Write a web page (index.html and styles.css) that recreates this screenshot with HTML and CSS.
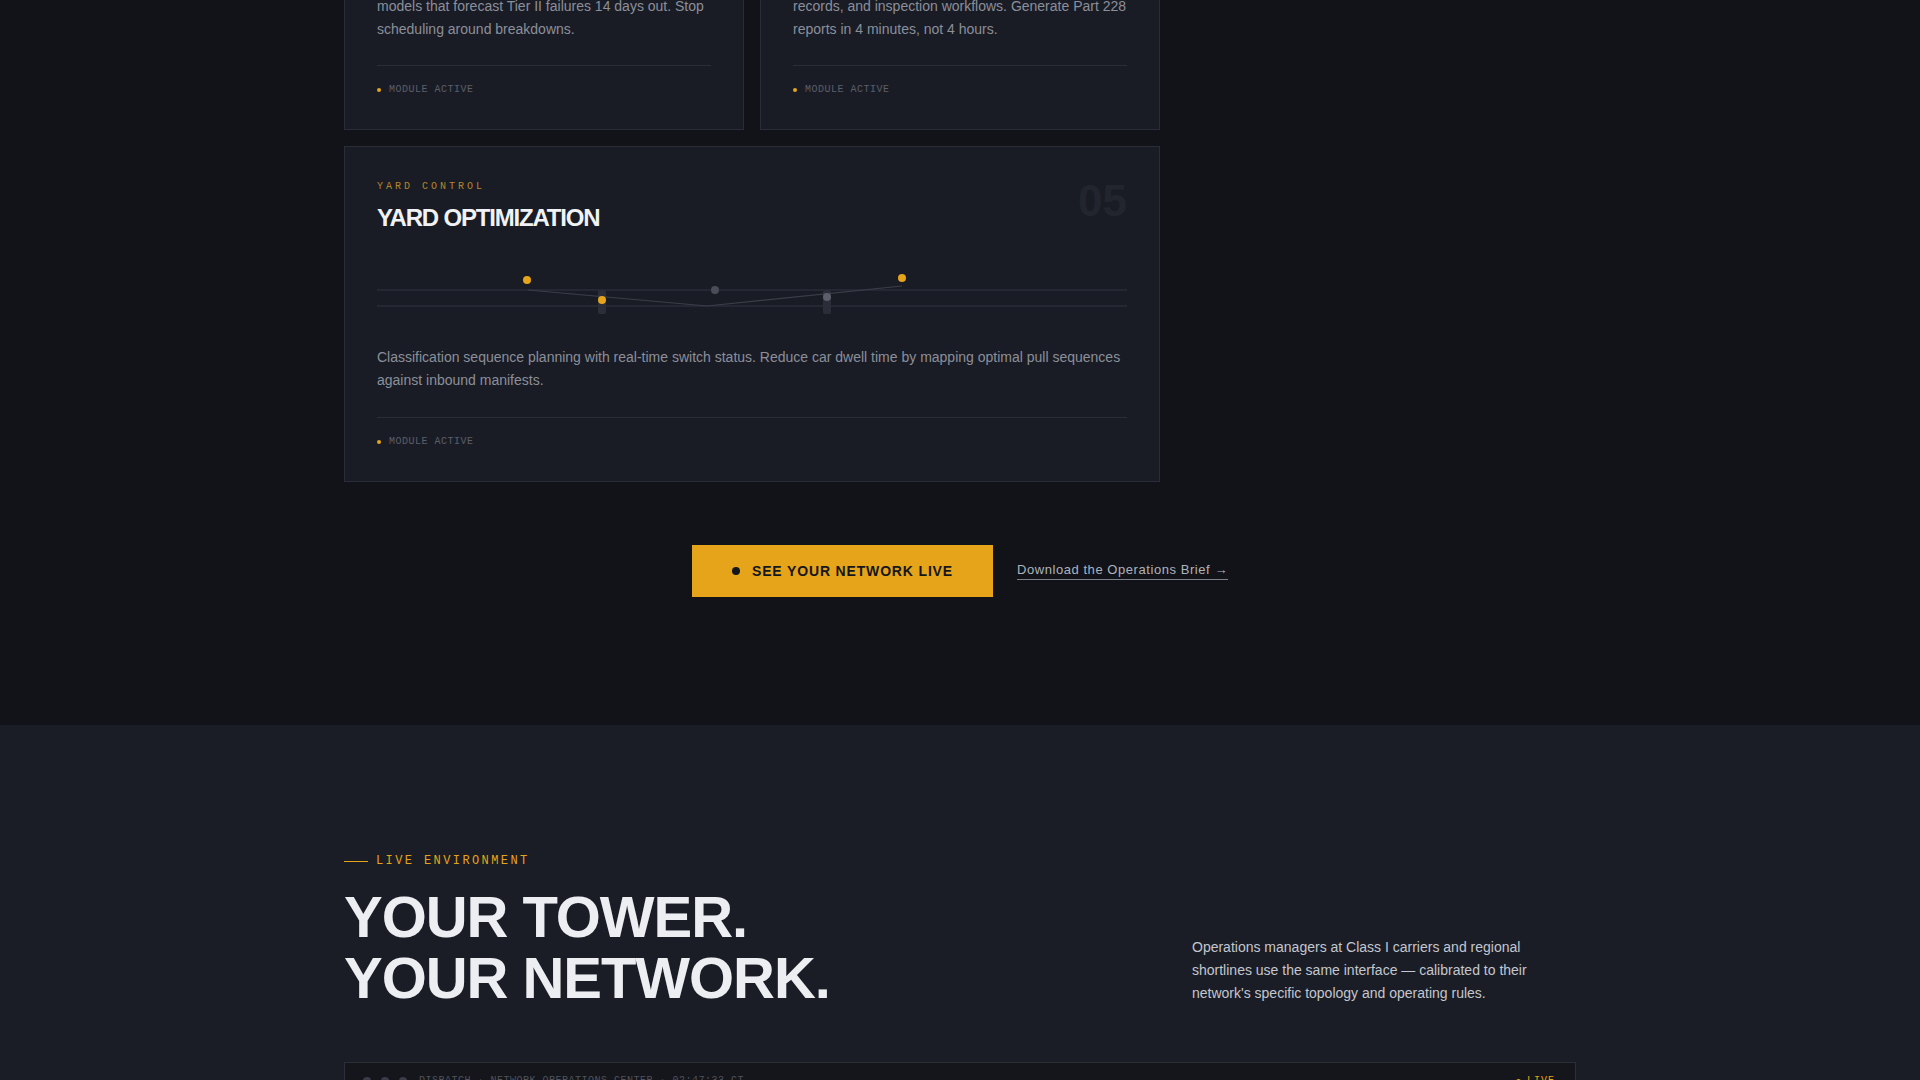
FILE: index.html
```html
<!DOCTYPE html>
<html lang="en">
<head>
<meta charset="utf-8">
<title>Dispatch — Modules</title>
<link rel="stylesheet" href="styles.css">
</head>
<body>
<section class="modules-section">
  <div class="container">
    <div class="modules">
      <article class="module">
        <div class="module-label">Predictive</div>
        <h3 class="module-title">Fleet Health</h3>
        <span class="module-num">03</span>
        <svg class="module-chart" width="334" height="64" viewBox="0 0 334 64">
          <line class="track" x1="0" y1="45" x2="334" y2="45"/>
          <rect class="bar" x="20" y="30" width="8" height="15" rx="2"/>
          <rect class="bar" x="80" y="22" width="8" height="23" rx="2"/>
          <rect class="bar" x="140" y="26" width="8" height="19" rx="2"/>
          <rect class="bar bar--hot" x="200" y="12" width="8" height="33" rx="2"/>
          <rect class="bar" x="260" y="28" width="8" height="17" rx="2"/>
        </svg>
        <p class="module-desc">Bearing telemetry and detector data feed predictive models that forecast Tier II failures 14 days out. Stop scheduling around breakdowns.</p>
        <div class="module-foot"><span class="foot-dot"></span>Module active</div>
      </article>

      <article class="module">
        <div class="module-label">Compliance</div>
        <h3 class="module-title">Crew Reporting</h3>
        <span class="module-num">04</span>
        <svg class="module-chart" width="334" height="64" viewBox="0 0 334 64">
          <line class="track" x1="0" y1="29" x2="334" y2="29"/>
          <line class="track" x1="0" y1="45" x2="334" y2="45"/>
          <circle class="pt pt--dim" cx="60" cy="29" r="4"/>
          <circle class="pt" cx="170" cy="45" r="4"/>
          <circle class="pt pt--dim" cx="280" cy="29" r="4"/>
        </svg>
        <p class="module-desc">Automatic hours-of-service logging, crew qualification records, and inspection workflows. Generate Part 228 reports in 4 minutes, not 4 hours.</p>
        <div class="module-foot"><span class="foot-dot"></span>Module active</div>
      </article>

      <article class="module module--wide">
        <div class="module-label">Yard Control</div>
        <h3 class="module-title">Yard Optimization</h3>
        <span class="module-num">05</span>
        <svg class="module-chart" width="750" height="64" viewBox="0 0 750 64">
          <line class="track" x1="0" y1="29" x2="750" y2="29"/>
          <line class="track" x1="0" y1="45" x2="750" y2="45"/>
          <rect class="bar" x="221" y="29" width="8" height="24" rx="2"/>
          <rect class="bar" x="446" y="29" width="8" height="24" rx="2"/>
          <polyline class="route" points="151,29 330,45 525,25"/>
          <circle class="pt" cx="150" cy="19" r="4"/>
          <circle class="pt" cx="225" cy="39" r="4"/>
          <circle class="pt pt--dim" cx="338" cy="29" r="4"/>
          <circle class="pt pt--mid" cx="450" cy="36" r="4"/>
          <circle class="pt" cx="525" cy="17" r="4"/>
        </svg>
        <p class="module-desc">Classification sequence planning with real-time switch status. Reduce car dwell time by mapping optimal pull sequences against inbound manifests.</p>
        <div class="module-foot"><span class="foot-dot"></span>Module active</div>
      </article>
    </div>

    <div class="cta">
      <a class="btn-primary" href="#live"><span class="btn-dot"></span>See your network live</a>
      <a class="link-brief" href="#brief">Download the Operations Brief →</a>
    </div>
  </div>
</section>

<section class="live-section" id="live">
  <div class="container">
    <div class="live-head">
      <div class="live-intro">
        <div class="eyebrow"><span class="eyebrow-line"></span>Live Environment</div>
        <h2 class="live-title">YOUR TOWER.<br>YOUR NETWORK.</h2>
      </div>
      <p class="live-copy">Operations managers at Class I carriers and regional shortlines use the same interface — calibrated to their network's specific topology and operating rules.</p>
    </div>

    <div class="console">
      <div class="console-bar">
        <div class="console-dots"><span></span><span></span><span></span></div>
        <span class="console-title">DISPATCH · NETWORK OPERATIONS CENTER · 02:47:33 CT</span>
        <span class="console-live"><span class="live-dot"></span>LIVE</span>
      </div>
      <div class="console-body"></div>
    </div>
  </div>
</section>
</body>
</html>
```
FILE: styles.css
```css
* { box-sizing: border-box; }

:root {
  --bg: #121318;
  --bg-raised: #1b1d26;
  --card: #1a1c25;
  --line: #2a2d37;
  --amber: #e5a419;
  --text: #eceef2;
  --muted: #8b8f9a;
  --sans: "Liberation Sans", Arial, sans-serif;
  --mono: "Liberation Mono", "DejaVu Sans Mono", monospace;
}

html, body { margin: 0; }

body {
  background: var(--bg);
  color: var(--text);
  font-family: var(--sans);
}

a { text-decoration: none; }

.container {
  width: 1232px;
  margin: 0 auto;
}

/* ---------- module grid ---------- */

.modules-section {
  margin-top: -226.5px;
  padding-bottom: 128px;
}

.modules {
  display: grid;
  grid-template-columns: repeat(3, 1fr);
  gap: 16px;
}

.module {
  position: relative;
  background: var(--card);
  border: 1px solid var(--line);
  padding: 32px;
}

.module--wide { grid-column: span 2; }

.module-label {
  font-family: var(--mono);
  font-size: 10px;
  line-height: 16px;
  letter-spacing: 0.3em;
  text-transform: uppercase;
  color: #b5862a;
  margin-bottom: 10px;
}

.module-title {
  margin: 0;
  font-size: 24px;
  line-height: 1.1;
  font-weight: 700;
  letter-spacing: -0.05em;
  text-transform: uppercase;
  color: #f1f2f5;
}

.module-num {
  position: absolute;
  top: 32px;
  right: 32px;
  font-size: 44px;
  line-height: 1;
  font-weight: 700;
  color: #22252e;
}

.module-chart {
  display: block;
  margin: 30px 0 20px;
  overflow: visible;
}

.module--wide .module-chart { margin-bottom: 21px; }

.track { stroke: #252832; stroke-width: 2; }
.bar { fill: #2b2e39; }
.bar--hot { fill: #6b5324; }
.route { fill: none; stroke: #3b3e49; stroke-width: 1.2; }
.pt { fill: var(--amber); }
.pt--dim { fill: #4a4d58; }
.pt--mid { fill: #5c5f6a; }

.module-desc {
  margin: 0 0 25px;
  font-size: 14px;
  line-height: 1.6;
  color: var(--muted);
}

.module--wide .module-desc { line-height: 1.63; }

.module-foot {
  display: flex;
  align-items: center;
  gap: 8px;
  border-top: 1px solid var(--line);
  padding-top: 17px;
  font-family: var(--mono);
  font-size: 10px;
  line-height: 14px;
  letter-spacing: 0.05em;
  text-transform: uppercase;
  color: #5a5e69;
}

.foot-dot {
  width: 4px;
  height: 4px;
  border-radius: 50%;
  background: var(--amber);
}

/* ---------- call to action ---------- */

.cta {
  margin-top: 63px;
  display: flex;
  justify-content: center;
  align-items: center;
  gap: 24px;
}

.btn-primary {
  display: inline-flex;
  align-items: center;
  gap: 12px;
  height: 52px;
  padding: 0 40px;
  background: var(--amber);
  color: #15161a;
  font-size: 14px;
  font-weight: 700;
  letter-spacing: 0.06em;
  text-transform: uppercase;
}

.btn-dot {
  width: 8px;
  height: 8px;
  border-radius: 50%;
  background: #15161a;
}

.link-brief {
  color: #aeb3bd;
  font-size: 13px;
  letter-spacing: 0.043em;
  padding-bottom: 2px;
  border-bottom: 1px solid #7a7f8a;
}

/* ---------- live environment ---------- */

.live-section {
  background: var(--bg-raised);
  padding-top: 128px;
}

.live-head {
  display: flex;
  justify-content: space-between;
  align-items: flex-end;
}

.eyebrow {
  display: flex;
  align-items: center;
  gap: 8px;
  font-family: var(--mono);
  font-size: 12px;
  line-height: 16px;
  letter-spacing: 0.2em;
  text-transform: uppercase;
  color: var(--amber);
  margin-bottom: 17px;
}

.eyebrow-line {
  width: 24px;
  height: 1px;
  background: var(--amber);
}

.live-title {
  margin: 0;
  font-size: 58px;
  line-height: 61px;
  font-weight: 700;
  letter-spacing: -0.018em;
  color: #eceef2;
}

.live-copy {
  width: 384px;
  margin: 0 0 3px;
  font-size: 14px;
  line-height: 1.64;
  color: #c3c7cf;
}

.console {
  margin-top: 54px;
  border: 1px solid #2c2f37;
  background: #14161b;
}

.console-bar {
  display: flex;
  align-items: center;
  gap: 12px;
  padding: 10px 20px 10px 18px;
  border-bottom: 1px solid #24272f;
  font-family: var(--mono);
  font-size: 10px;
  line-height: 16px;
}

.console-dots {
  display: flex;
  gap: 10px;
}

.console-dots span {
  width: 8px;
  height: 8px;
  border-radius: 50%;
  background: #3a3d47;
}

.console-title {
  letter-spacing: 0.05em;
  color: #50545e;
}

.console-live {
  margin-left: auto;
  display: flex;
  align-items: center;
  gap: 6px;
  letter-spacing: 0.1em;
  color: var(--amber);
}

.live-dot {
  width: 5px;
  height: 5px;
  border-radius: 50%;
  background: var(--amber);
}

.console-body {
  height: 480px;
}
```
